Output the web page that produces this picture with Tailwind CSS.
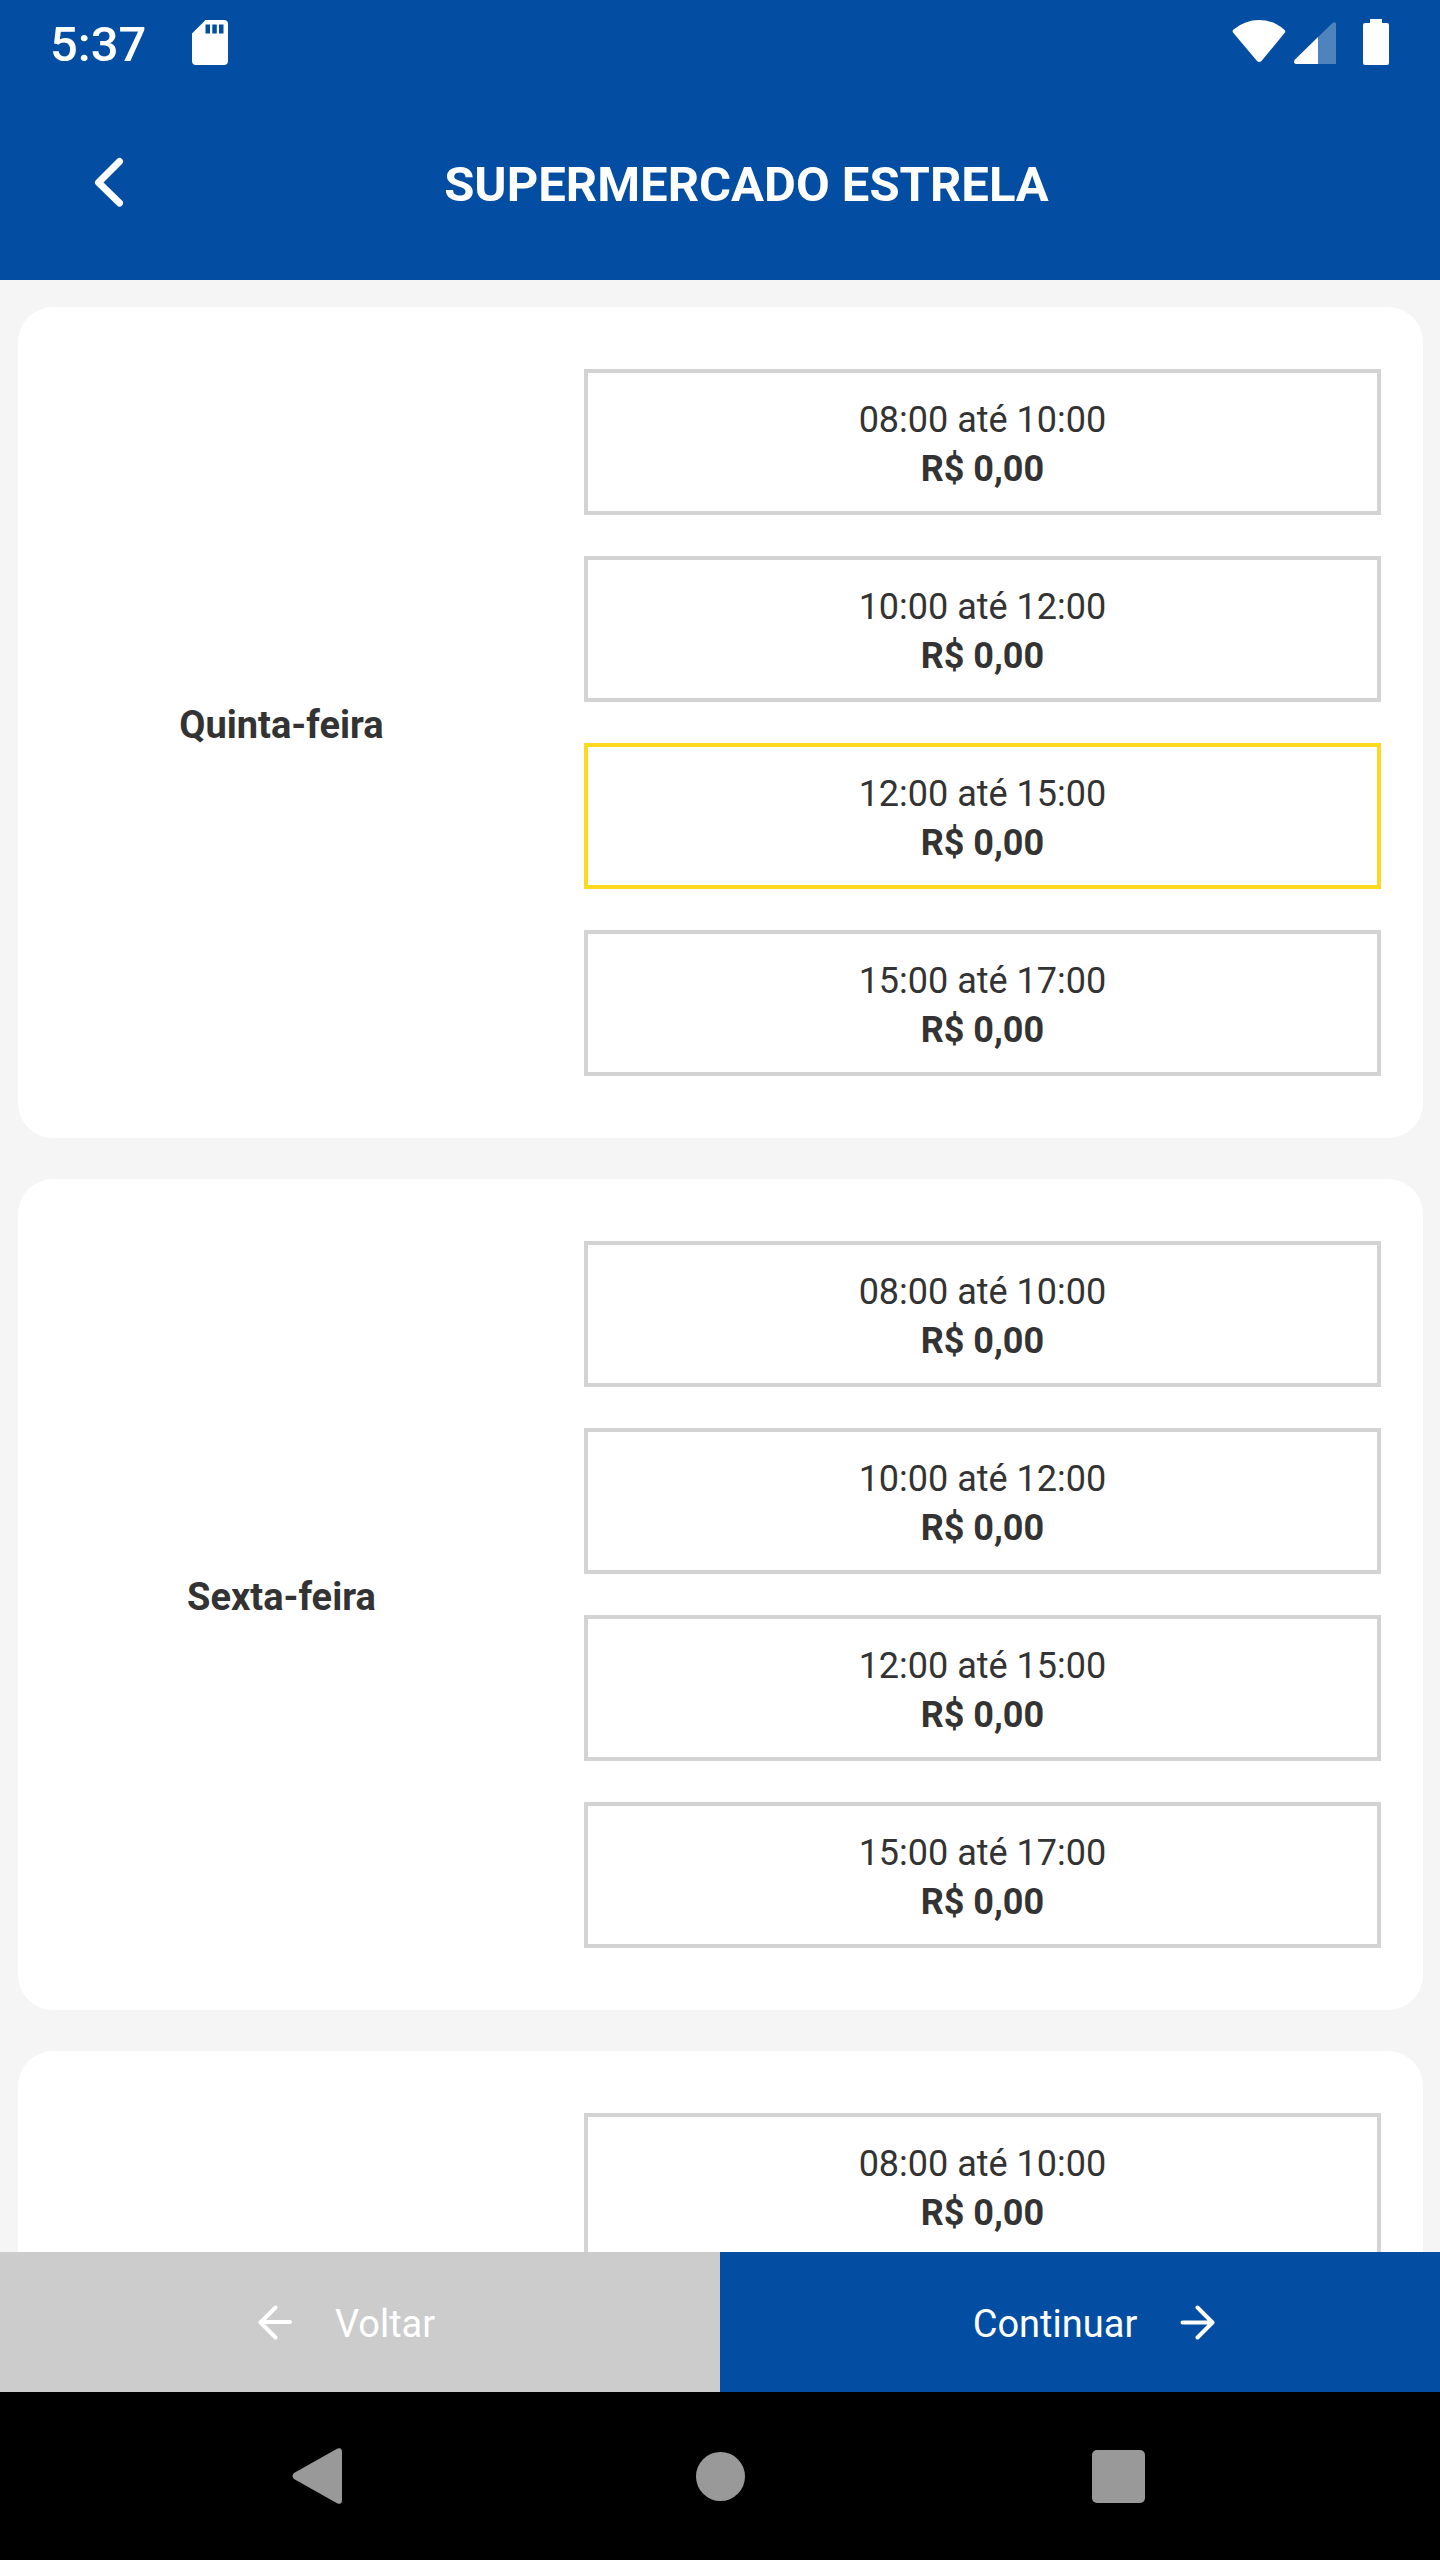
<!DOCTYPE html>
<html lang="pt-BR">
<head>
  <meta charset="UTF-8">
  <meta name="viewport" content="width=device-width, initial-scale=1.0">
  <title>Supermercado Estrela</title>
  <script src="https://cdn.jsdelivr.net/npm/@tailwindcss/browser@4"></script>
</head>
<body class="bg-[#f5f5f5] font-['Roboto',sans-serif] text-[#333333]">
  <div class="flex h-screen flex-col">

    <!-- Header -->
    <header class="shrink-0 bg-[#034ea2] text-white">
      <div class="flex h-[84px] items-center justify-between px-[50px]">
        <div class="flex items-center gap-[46px]">
          <span class="pt-1.5 text-[49px] leading-[56px] font-medium">5:37</span>
          <svg class="h-[45px] w-[36px]" viewBox="0 0 36 45" fill="currentColor">
            <path fill-rule="evenodd" d="M13.500 0H32a4 4 0 0 1 4 4v37a4 4 0 0 1-4 4H4a4 4 0 0 1-4-4V13.500ZM13.500 4.500v9h4.500v-9ZM20.300 4.500v9h4.500v-9ZM27 4.500v9h4.500v-9Z"/>
          </svg>
        </div>
        <svg class="h-[48px] w-[160px]" viewBox="0 0 160 48" fill="currentColor">
          <path d="M3.500 11.500Q15 2 29 2T54 11.500Q56 13 55 14.500L31.500 43Q29 45 27 43L3 14.500Q2 13 3.500 11.500Z"/>
          <path d="M88 19V46H66q-3-1-1.500-4Z"/>
          <path opacity=".3" d="M88 19 102.500 5Q106 3 106 6V46H88Z"/>
          <path d="M140 1h12v4h5q2 0 2 2v38q0 2-2 2h-22q-2 0-2-2V7q0-2 2-2h5Z"/>
        </svg>
      </div>
      <div class="flex h-[196px] items-center">
        <button type="button" aria-label="Voltar" class="flex h-full w-[216px] items-center pl-[94px]">
          <svg class="h-[50px] w-[30px]" viewBox="0 0 30 50" fill="none" stroke="currentColor" stroke-width="7" stroke-linecap="round" stroke-linejoin="round">
            <path d="M25.500 4.500 4.500 25.500l21 20.500"/>
          </svg>
        </button>
        <h1 class="flex-1 pt-1.5 pr-[163px] text-center text-[49px] leading-[56px] font-bold">SUPERMERCADO ESTRELA</h1>
      </div>
    </header>

    <!-- Delivery days -->
    <main id="days" class="flex min-h-0 flex-1 flex-col gap-[41px] overflow-y-auto pt-[27px] pr-[17px] pl-[18px] [scrollbar-width:none]"></main>

    <!-- Actions -->
    <footer class="flex h-[140px] shrink-0 text-[38px] leading-[46px] text-white">
      <button type="button" class="flex flex-1 items-center justify-center gap-[42px] bg-[#cccccc] pr-[28px]">
        <svg class="h-[36px] w-[36px]" viewBox="0 0 36 36" fill="none" stroke="currentColor" stroke-width="4" stroke-linecap="round" stroke-linejoin="round">
          <path d="M33 18H3.500M18.500 3.500 3.500 18.500l15 15"/>
        </svg>
        <span class="pt-1">Voltar</span>
      </button>
      <button type="button" class="flex flex-1 items-center justify-center gap-[42px] bg-[#034ea2] pl-[28px]">
        <span class="pt-1">Continuar</span>
        <svg class="h-[36px] w-[36px]" viewBox="0 0 36 36" fill="none" stroke="currentColor" stroke-width="4" stroke-linecap="round" stroke-linejoin="round">
          <path d="M3.500 18.500h30M18.500 3.500l15 15-15 15"/>
        </svg>
      </button>
    </footer>

    <!-- System navigation -->
    <nav class="flex h-[168px] shrink-0 items-center justify-between bg-black px-[292px] text-[#999999]">
      <button type="button" aria-label="Voltar" class="flex size-[56px] items-center">
        <svg class="h-[56px] w-[50px]" viewBox="0 0 50 56" fill="currentColor"><path d="M2 25 45.500.500Q50-1 50 4v48q0 5-4.500 3.500L2 31Q-1 28 2 25Z"/></svg>
      </button>
      <button type="button" aria-label="Início" class="flex size-[56px] items-center justify-center">
        <span class="size-[49px] rounded-full bg-[#999999]"></span>
      </button>
      <button type="button" aria-label="Recentes" class="flex size-[56px] items-center">
        <span class="size-[53px] rounded-[5px] bg-[#999999]"></span>
      </button>
    </nav>
  </div>

  <script>
    const days = ['Quinta-feira', 'Sexta-feira', 'Sábado'];
    const hours = ['08:00 até 10:00', '10:00 até 12:00', '12:00 até 15:00', '15:00 até 17:00'];
    const selected = '0-2';

    // Render one card per day, with its time slots
    document.getElementById('days').innerHTML = days.map((day, d) => `
      <fieldset class="flex shrink-0 items-center rounded-[35px] bg-white py-[62px]" aria-label="${day}">
        <h2 class="w-3/8 pt-1 text-center text-[38px] leading-[46px] font-bold">${day}</h2>
        <div class="flex w-5/8 flex-col gap-[41px] pl-[39px] pr-[42px]">
          ${hours.map((hour, h) => `
            <label class="relative flex h-[146px] flex-col items-center justify-center border-4 border-[#d3d3d3] pt-1.5 text-[36px] leading-[49px] has-checked:border-[#fdd920]">
              <input type="radio" name="slot" value="${d}-${h}" class="sr-only" ${selected === `${d}-${h}` ? 'checked' : ''}>
              <span>${hour}</span>
              <span class="font-bold">R$ 0,00</span>
            </label>
          `).join('')}
        </div>
      </fieldset>
    `).join('');
  </script>
</body>
</html>
